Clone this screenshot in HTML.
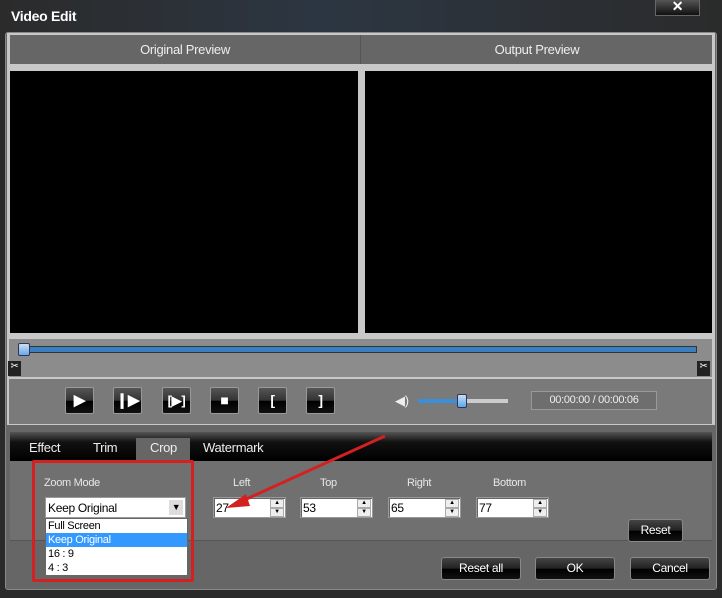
<!DOCTYPE html>
<html><head><style>
*{margin:0;padding:0;box-sizing:border-box}
body{width:722px;height:598px;overflow:hidden;background:#2a2a2a;font-family:"Liberation Sans",sans-serif;position:relative;letter-spacing:-0.3px}
.a{position:absolute}
.btn{position:absolute;width:29px;height:27px;border:1px solid #999;border-radius:2px;background:linear-gradient(#555 0,#333 50%,#000 52%,#111 100%);color:#fff;text-align:center;font-weight:bold}
.lbl{position:absolute;font-size:11px;color:#e8e8e8}
.spin{position:absolute;height:21px;width:73px;background:#fff;border:1px solid #999;box-shadow:inset 1px 1px 0 #666;font-size:12px;padding:3px 2px;color:#000}
.spin i{position:absolute;right:1px;width:14px;height:9px;background:#eee;border:1px solid #aaa;font-size:6px;font-style:normal;text-align:center;line-height:7px}
.bb{position:absolute;height:23px;border:1px solid #888;border-radius:3px;background:linear-gradient(#444 0,#222 50%,#000 52%,#111);color:#fff;font-size:12px;text-align:center;line-height:21px}
</style></head><body>
<div class="a" style="left:0;top:0;width:722px;height:34px;background:linear-gradient(90deg,#2b2b2b 0,#2c3642 45%,#2b2b2b 100%)"></div>
<div class="a" style="left:11px;top:8px;color:#fff;font-weight:bold;font-size:14px">Video Edit</div>
<div class="a" style="left:655px;top:0;width:45px;height:16px;background:linear-gradient(#555,#111);border:1px solid #666;border-top:none;color:#fff;font-weight:bold;font-size:14px;text-align:center;line-height:13px">✕</div>
<div class="a" style="left:5px;top:32px;width:712px;height:558px;background:#666;border:1px solid #888;border-radius:3px"></div>
<div class="a" style="left:7px;top:33px;width:708px;height:392px;background:#c8c8c8"></div>
<div class="a" style="left:10px;top:35px;width:702px;height:29px;background:#666"></div>
<div class="a" style="left:360px;top:35px;width:1px;height:29px;background:#555"></div>
<div class="a" style="left:10px;top:42px;width:350px;text-align:center;color:#eee;font-size:13px">Original Preview</div>
<div class="a" style="left:362px;top:42px;width:350px;text-align:center;color:#eee;font-size:13px">Output Preview</div>
<div class="a" style="left:10px;top:71px;width:348px;height:262px;background:#000"></div>
<div class="a" style="left:365px;top:71px;width:347px;height:262px;background:#000"></div>
<div class="a" style="left:9px;top:339px;width:703px;height:38px;background:#8c8c8c"></div>
<div class="a" style="left:20px;top:346px;width:677px;height:7px;background:#3a7fc0;border:1px solid #333"></div>
<div class="a" style="left:18px;top:343px;width:12px;height:13px;background:linear-gradient(#cde,#6ae);border:1px solid #335;border-radius:2px"></div>
<div class="a" style="left:8px;top:361px;width:13px;height:15px;background:#222;color:#fff;font-size:10px;text-align:center">✂</div>
<div class="a" style="left:697px;top:361px;width:13px;height:15px;background:#222;color:#fff;font-size:10px;text-align:center">✂</div>
<div class="a" style="left:9px;top:379px;width:703px;height:45px;background:#7a7a7a"></div>
<div class="btn" style="left:65px;top:387px;font-size:15px;line-height:25px">▶</div>
<div class="btn" style="left:113px;top:387px;font-size:15px;line-height:25px">❙▶</div>
<div class="btn" style="left:162px;top:387px;font-size:13px;line-height:25px">[▶]</div>
<div class="btn" style="left:210px;top:387px;font-size:14px;line-height:25px">■</div>
<div class="btn" style="left:258px;top:387px;font-size:14px;line-height:25px">[</div>
<div class="btn" style="left:306px;top:387px;font-size:14px;line-height:25px">]</div>
<div class="a" style="left:395px;top:393px;color:#eee;font-size:13px">◀)</div>
<div class="a" style="left:418px;top:399px;width:90px;height:4px;background:#ccc"></div>
<div class="a" style="left:418px;top:399px;width:44px;height:4px;background:#3a8fd8"></div>
<div class="a" style="left:457px;top:394px;width:10px;height:14px;background:linear-gradient(#cde,#5ae);border:1px solid #335;border-radius:2px"></div>
<div class="a" style="left:531px;top:391px;width:126px;height:19px;background:#6e6e6e;border:1px solid #999;color:#eee;font-size:11px;text-align:center;line-height:17px">00:00:00 / 00:00:06</div>
<div class="a" style="left:10px;top:432px;width:702px;height:29px;background:linear-gradient(#555,#111 35%,#000)"></div>
<div class="a" style="left:136px;top:438px;width:54px;height:23px;background:#666"></div>
<div class="a" style="left:29px;top:440px;color:#eee;font-size:13px">Effect</div>
<div class="a" style="left:93px;top:440px;color:#eee;font-size:13px">Trim</div>
<div class="a" style="left:150px;top:440px;color:#eee;font-size:13px">Crop</div>
<div class="a" style="left:203px;top:440px;color:#eee;font-size:13px">Watermark</div>
<div class="a" style="left:10px;top:461px;width:702px;height:80px;background:#707070;border-bottom:1px solid #555"></div>
<div class="lbl" style="left:44px;top:477px">Zoom Mode</div>
<div class="lbl" style="left:233px;top:477px">Left</div>
<div class="lbl" style="left:320px;top:477px">Top</div>
<div class="lbl" style="left:407px;top:477px">Right</div>
<div class="lbl" style="left:493px;top:477px">Bottom</div>
<div class="a" style="left:45px;top:497px;width:141px;height:21px;background:#fff;border:1px solid #999;font-size:12px;padding:3px 2px">Keep Original<span style="position:absolute;right:2px;top:2px;width:14px;height:15px;background:#ddd;font-size:9px;text-align:center;line-height:14px">▼</span></div>
<div class="a" style="left:45px;top:518px;width:143px;height:58px;background:#fff;border:1px solid #666;font-size:11px;line-height:14px">
<div style="padding-left:2px">Full Screen</div><div style="padding-left:2px;background:#3399ff;color:#fff">Keep Original</div><div style="padding-left:2px">16 : 9</div><div style="padding-left:2px">4 : 3</div></div>
<div class="spin" style="left:213px;top:497px">27<i style="top:1px">▲</i><i style="top:10px">▼</i></div>
<div class="spin" style="left:300px;top:497px">53<i style="top:1px">▲</i><i style="top:10px">▼</i></div>
<div class="spin" style="left:388px;top:497px">65<i style="top:1px">▲</i><i style="top:10px">▼</i></div>
<div class="spin" style="left:476px;top:497px">77<i style="top:1px">▲</i><i style="top:10px">▼</i></div>
<div class="bb" style="left:628px;top:519px;width:55px">Reset</div>
<div class="bb" style="left:441px;top:557px;width:80px">Reset all</div>
<div class="bb" style="left:535px;top:557px;width:80px">OK</div>
<div class="bb" style="left:630px;top:557px;width:80px">Cancel</div>
<div class="a" style="left:32px;top:460px;width:162px;height:122px;border:3px solid #d42020;border-radius:2px"></div>
<svg class="a" style="left:0;top:0" width="722" height="598"><line x1="385" y1="436" x2="240" y2="502" stroke="#d42020" stroke-width="3"/><polygon points="226,508 246,494 250,506" fill="#d42020"/></svg>
</body></html>
